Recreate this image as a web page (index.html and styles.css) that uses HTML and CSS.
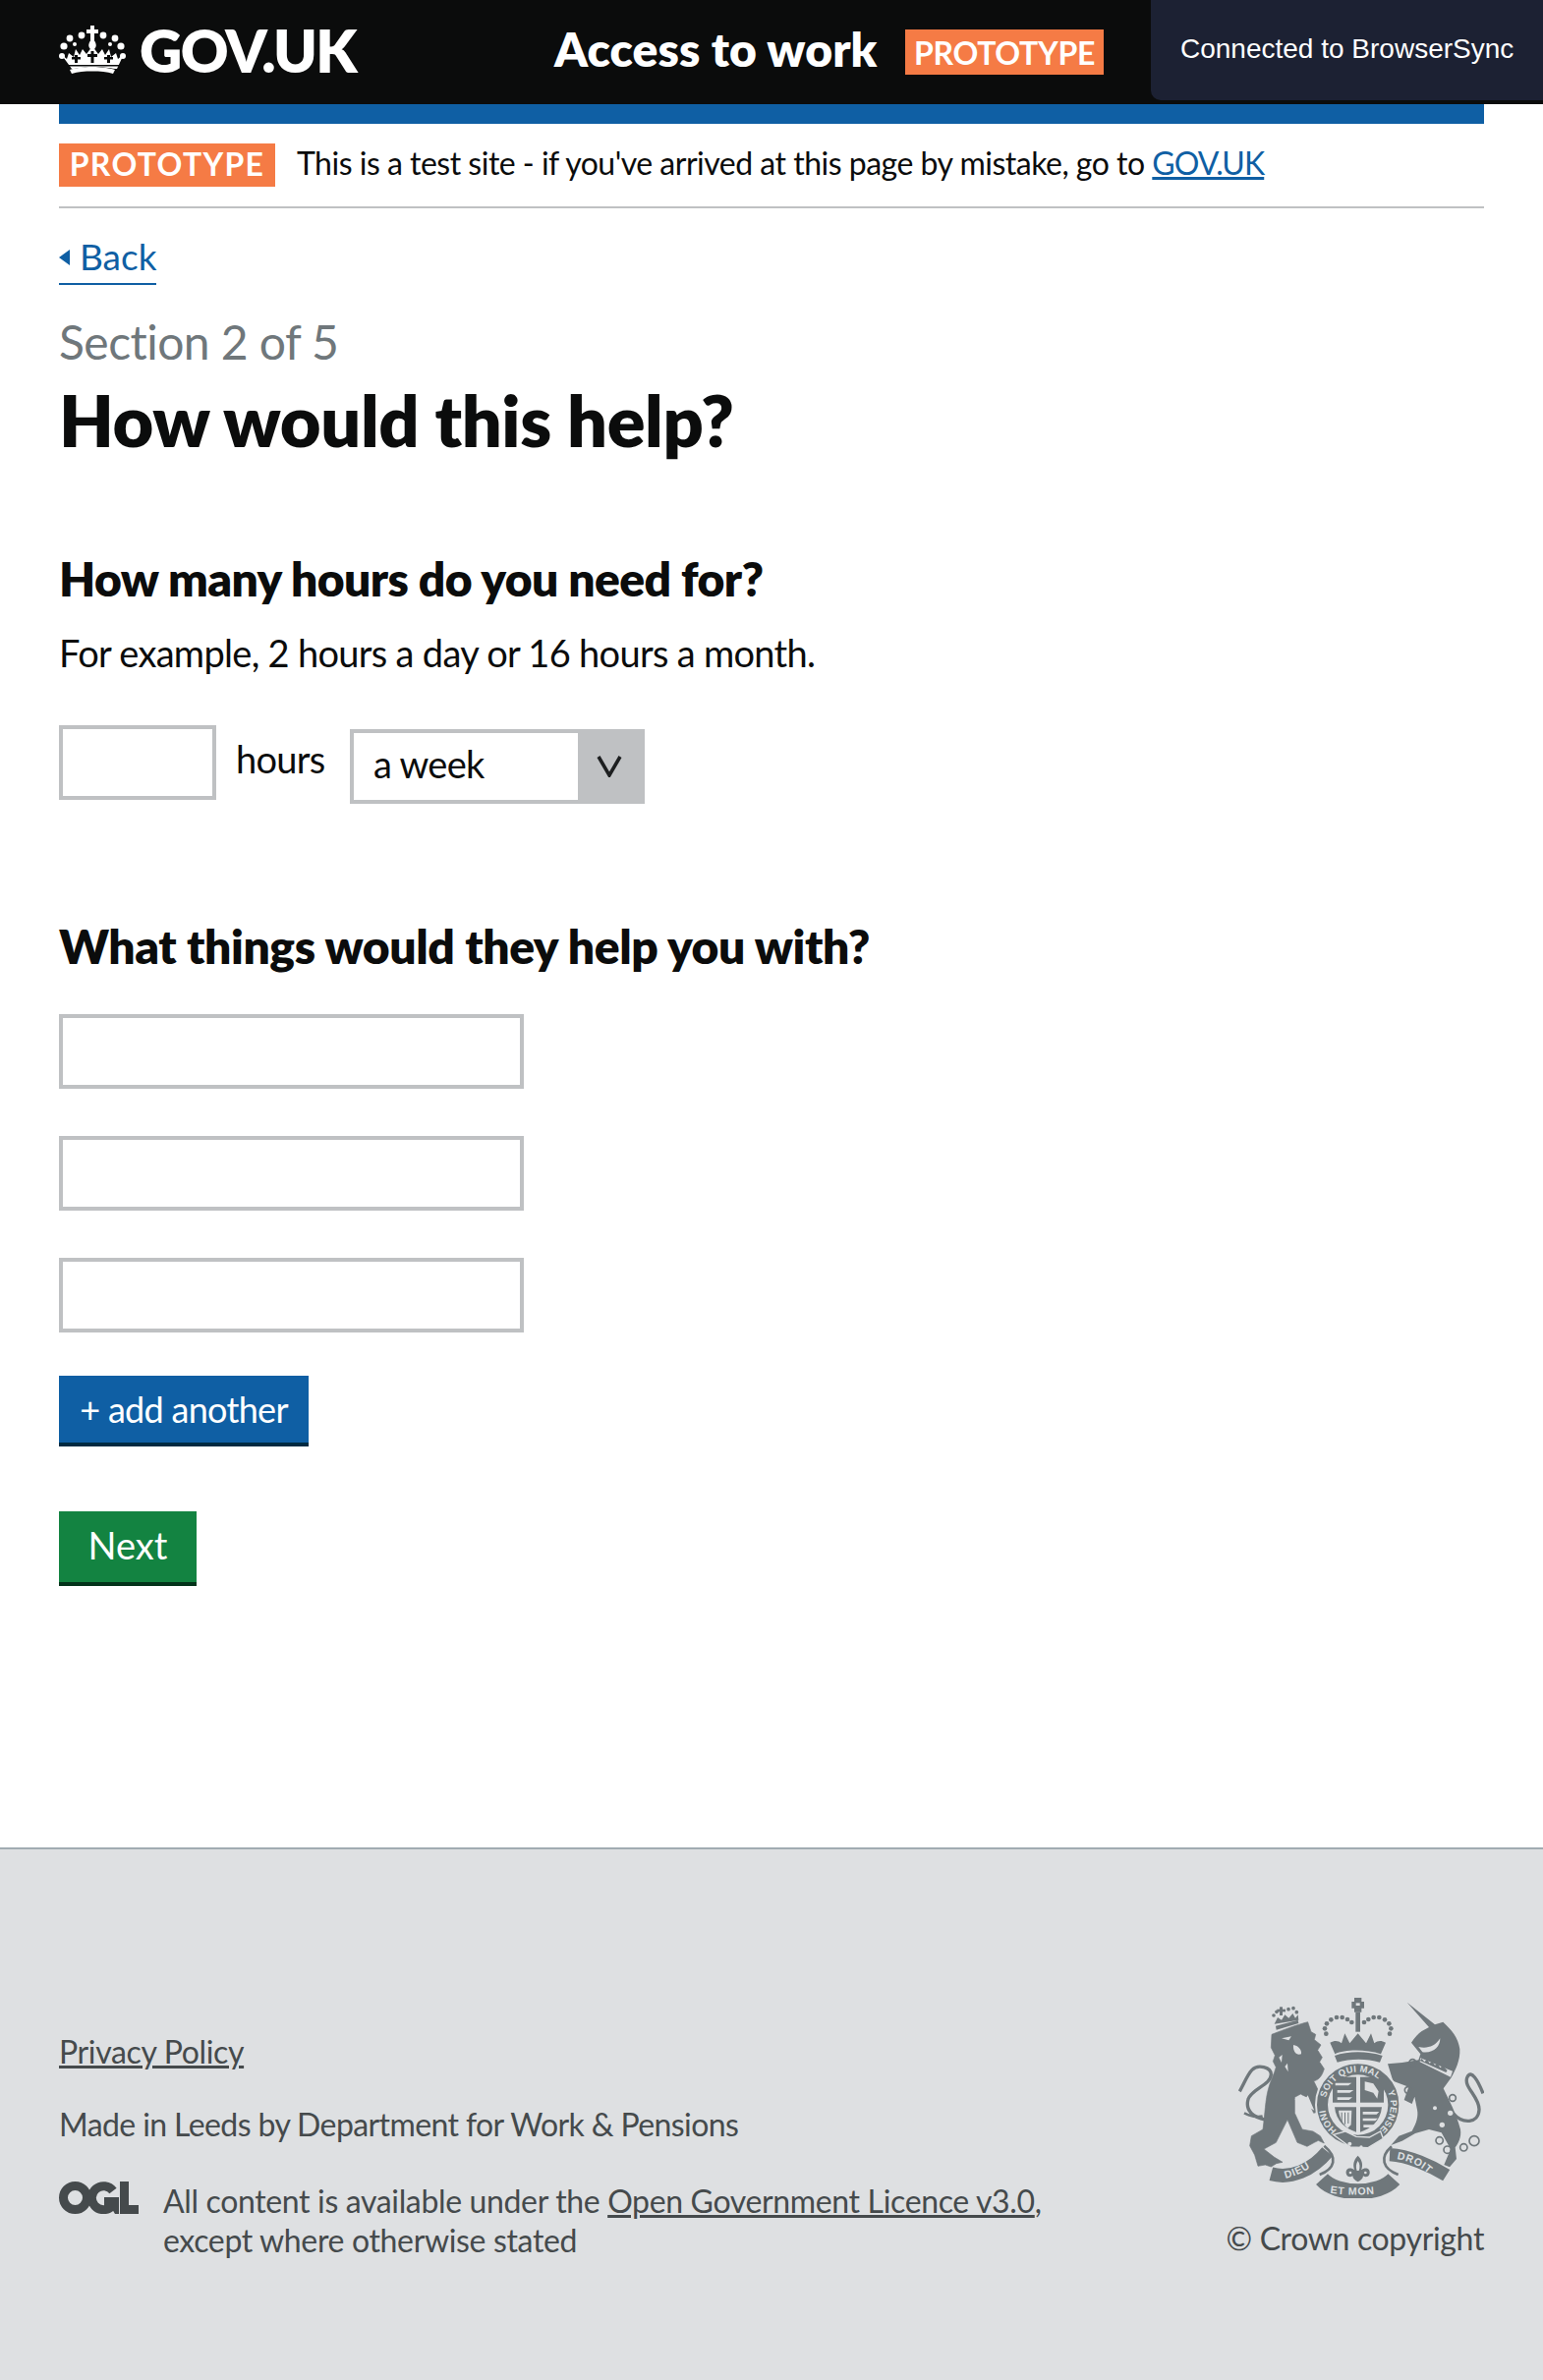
FILE: index.html
```html
<!DOCTYPE html>
<html lang="en">
<head>
<meta charset="utf-8">
<title>How would this help?</title>
<link rel="stylesheet" href="styles.css">
</head>
<body>
<header class="site-header">
  <a class="logo" href="#">
    <svg class="crown" viewBox="0 0 68 50" aria-hidden="true">
      <g fill="#fff">
        <rect x="32" y="0" width="4" height="15"/><rect x="28" y="4" width="12" height="4"/>
        <path d="M34 13c4 4 5 8 2 11h-4c-3-3-2-7 2-11z"/>
        <circle cx="23" cy="10" r="3.400"/><circle cx="45" cy="10" r="3.400"/>
        <circle cx="11" cy="13" r="3.400"/><circle cx="57" cy="13" r="3.400"/>
        <circle cx="5" cy="21" r="3.600"/><circle cx="63" cy="21" r="3.600"/>
        <circle cx="16" cy="19" r="2"/><circle cx="52" cy="19" r="2"/>
        <circle cx="3" cy="31" r="3"/><circle cx="65" cy="31" r="3"/>
        <path d="M2 29l6 5 2-6 5 4 2-8 4 6 3-6 4 5 6-8 6 8 4-5 3 6 4-6 2 8 5-4 2 6 6-5-7 15-2 0c-5-1-13-2-21-2s-16 1-21 2l-2 0z"/>
        <path d="M11 45c6-2 15-3 23-3s17 1 23 3l-2 4c-6-2-13-2.500-21-2.500s-15 .5-21 2.500z"/>
      </g>
      <g fill="#0b0c0c">
        <rect x="32.500" y="26" width="3" height="12"/><rect x="29" y="29" width="10" height="3"/>
        <rect x="16" y="30" width="3" height="8"/><rect x="49" y="30" width="3" height="8"/>
        <rect x="13" y="32" width="9" height="2.500"/><rect x="46" y="32" width="9" height="2.500"/>
        <rect x="7" y="40" width="54" height="1.500"/>
      </g>
    </svg>
    <span class="logo-text">GOV.UK</span>
  </a>
  <span class="service-name">Access to work</span>
  <span class="header-tag">PROTOTYPE</span>
</header>
<div class="notify">Connected to BrowserSync</div>

<div class="wrap">
  <div class="blue-bar"></div>
  <div class="phase">
    <span class="phase-tag">PROTOTYPE</span>
    <span class="phase-text">This is a test site - if you've arrived at this page by mistake, go to <a href="#">GOV.UK</a></span>
  </div>
  <a class="back" href="#">Back</a>

  <main>
    <p class="caption">Section 2 of 5</p>
    <h1>How would this help?</h1>

    <h2 class="q-one">How many hours do you need for?</h2>
    <p class="hint">For example, 2 hours a day or 16 hours a month.</p>
    <div class="hours-row">
      <div class="field field-short"></div>
      <span class="hours-label">hours</span>
      <div class="select">
        <span class="select-value">a week</span>
        <span class="select-arrow">
          <svg class="chevron" viewBox="0 0 26 22" aria-hidden="true"><path d="M2 1l11 19 11-19" fill="none" stroke="#1d1f20" stroke-width="3.500"/></svg>
        </span>
      </div>
    </div>

    <h2 class="q-two">What things would they help you with?</h2>
    <div class="fields">
      <div class="field field-long"></div>
      <div class="field field-long"></div>
      <div class="field field-long"></div>
    </div>
    <a class="btn btn-blue" href="#">+ add another</a>
    <a class="btn btn-green" href="#">Next</a>
  </main>
</div>

<footer class="site-footer">
  <div class="footer-left">
    <a class="footer-link" href="#">Privacy Policy</a>
    <p class="made">Made in Leeds by Department for Work &amp; Pensions</p>
    <div class="licence">
      <svg class="ogl" viewBox="0 0 81 33" aria-hidden="true">
        <circle cx="16.500" cy="16.500" r="12" fill="none" stroke="#454a4c" stroke-width="9"/>
        <path d="M55 9.500A12 12 0 1 0 54 25" fill="none" stroke="#454a4c" stroke-width="9"/>
        <path d="M46 16h15v17h-4l-3-5h-8z" fill="#454a4c"/>
        <path d="M62 0h9v24h10v9H62z" fill="#454a4c"/>
      </svg>
      <p class="licence-text">All content is available under the <a href="#">Open Government Licence v3.0</a>,<br>except where otherwise stated</p>
    </div>
  </div>
  <div class="footer-right">
    <svg class="crest" viewBox="90 65 750 615" aria-hidden="true">
      <defs>
        <path id="garter-top" d="M357 375A100 100 0 0 1 540 342"/>
        <path id="garter-right" d="M545 352A100 100 0 0 1 515 475"/>
        <path id="garter-left" d="M392 474A100 100 0 0 1 356 380"/>
        <path id="rib-left" d="M232 620C265 612 305 595 335 565"/>
        <path id="rib-mid" d="M368 664C420 672 490 672 545 660"/>
        <path id="rib-right" d="M572 560C620 566 660 590 688 622"/>
      </defs>
      <!-- tails -->
      <g fill="none" stroke="#6f777b">
        <path d="M172 440c-34-6-62-26-52-62 10-32 70-44 70-76 0-22-40-32-58-14-14 14-24 42-38 66" stroke-width="10"/>
        <path d="M108 420c20 10 38 14 56 10" stroke-width="8"/>
        <path d="M745 420c30 35 78 32 80-10 2-40-50-70-36-100 12-24 32 10 48 50" stroke-width="10"/>
      </g>
      <g fill="#6f777b" stroke="#6f777b" stroke-width="2" stroke-linejoin="round">
        <!-- lion -->
        <path d="M192 180C230 165 270 150 302 142L312 172 326 180 322 196 342 212 332 228 346 250 338 264 352 285C346 305 336 320 320 322L356 396 366 416 350 412 352 426 334 416 320 420 298 372 280 362 262 372 262 420 285 470 318 476 340 490 352 512 334 504 322 510 300 522 270 510 240 440 205 510 168 530 200 555 225 570 206 574 190 584 172 578 150 582 140 548 125 520 130 490 165 470C172 420 172 380 182 345 188 320 200 300 205 280L196 262 202 244 190 220Z"/>
      </g>
      <g fill="#dee0e2">
        <path d="M258 212c14 2 26 14 24 28-14 6-26-8-24-28z"/>
        <path d="M222 192l30-6-8 12z"/>
        <path d="M214 250l10-8-2 24zM232 278l8-10 2 26z"/>
        <path d="M262 378l18-12 18 6 4-6 20 46-14-8-10 0-14-14z"/>
      </g>
      <g fill="#6f777b">
        <!-- lion crown -->
        <path d="M200 148l10-20 12 8 10-16 12 10 12-14 8 14 8-10 2 16z"/>
        <path d="M206 166l68-20-2-10-68 18z"/>
        <rect x="216" y="96" width="9" height="26"/><rect x="208" y="103" width="26" height="8"/>
        <circle cx="198" cy="122" r="5.500"/><circle cx="207" cy="111" r="5.500"/><circle cx="243" cy="103" r="5.500"/><circle cx="258" cy="100" r="5.500"/><circle cx="268" cy="112" r="5.500"/>
        <!-- centre crown -->
        <path d="M444 68h22v12h8v20h-8v12h-22v-12h-8v-20h8z"/>
        <path d="M449 84h12v8h-12z" fill="#dee0e2"/>
        <rect x="448" y="112" width="14" height="60"/>
        <path d="M370 205c15-8 25-6 35 2l10-30 15 30 25-30 25 30 15-30 10 30c10-8 20-10 35-2l-15 35c-45-15-110-15-140 0z"/>
        <path d="M384 245c40-15 100-15 146 0l-8 20c-40-12-90-12-130 0z"/>
        <circle cx="358" cy="178" r="7"/><circle cx="354" cy="162" r="7"/><circle cx="360" cy="147" r="7"/><circle cx="373" cy="135" r="7"/><circle cx="390" cy="128" r="7"/><circle cx="407" cy="128" r="7"/><circle cx="423" cy="134" r="7"/><circle cx="436" cy="143" r="7"/>
        <circle cx="552" cy="178" r="7"/><circle cx="556" cy="162" r="7"/><circle cx="550" cy="147" r="7"/><circle cx="537" cy="135" r="7"/><circle cx="520" cy="128" r="7"/><circle cx="503" cy="128" r="7"/><circle cx="487" cy="134" r="7"/><circle cx="474" cy="143" r="7"/>
        <!-- unicorn -->
        <path d="M605 82L690 150 715 142C740 165 762 190 766 225 768 260 752 290 740 312L716 345C730 375 755 420 768 470 772 495 760 515 752 525L756 560 735 585 718 578 738 530 710 480 672 470 630 482 590 505 556 518 580 490 620 475C634 450 640 430 636 410L628 370 620 392 596 380 610 340 562 322 546 270 590 266 640 258 646 240 618 205C628 190 640 176 650 170L672 158Z"/>
        <path d="M640 218c24 6 50 0 66-26 0 26-20 46-54 42z" fill="#dee0e2"/>
        <circle cx="712" cy="456" r="8" fill="#dee0e2"/><circle cx="690" cy="405" r="6" fill="#dee0e2"/><circle cx="737" cy="420" r="8" fill="#dee0e2"/>
        <path d="M646 252l98 40-6 18-94-46z" fill="#dee0e2"/>
        <path d="M650 254l8 10 8-8 8 12 8-6 8 12 8-6 8 14 8-6 14 14-4 6-80-36z"/>
        <!-- garter -->
        <circle cx="455" cy="395" r="128" stroke="#dee0e2" stroke-width="6"/>
        <circle cx="455" cy="395" r="92" fill="#dee0e2"/>
        <!-- shield quarters -->
        <path d="M378 310h72v78h-72z"/><path d="M462 310h72v78h-72z"/>
        <path d="M384 402h66v76c-30-8-62-32-66-76z"/><path d="M462 402h66c-4 44-36 68-66 76z"/>
        <g fill="#dee0e2">
          <path d="M386 328h50l-10 8h-40zM392 350h50l-12 8h-38zM392 372h46l-10 8h-36z"/>
          <path d="M476 324l26 6 16 24-4 22-12-18-26-8z"/>
          <path d="M470 416h50l-8 8h-42zM470 436h46l-8 8h-38zM472 456h34l-8 8h-26z"/>
          <path d="M396 412l40 0-2 44-10 10c-14-12-26-32-28-54z"/>
        </g>
        <path d="M404 418h3v30h-3zM414 418h3v36h-3zM424 418h3v34h-3z"/>
        <!-- garter buckle -->
        <path d="M380 486l36-10 34 16 40 2 34-18 8 22-46 28-54-2z" stroke="#dee0e2" stroke-width="4"/>
        <circle cx="430" cy="514" r="6" fill="#dee0e2"/><circle cx="465" cy="524" r="5" fill="#dee0e2"/>
        <!-- fleur -->
        <path d="M455 550c14 14 16 30 10 44 12-10 28-6 26 10-2 10-12 14-20 8 0 8-8 14-16 18-8-4-16-10-16-18-8 6-18 2-20-8-2-16 14-20 26-10-6-14-4-30 10-44z"/>
        <path d="M455 566c6 8 7 20 3 30h-6c-4-10-3-22 3-30z" fill="#dee0e2"/>
        <circle cx="432" cy="602" r="4" fill="#dee0e2"/><circle cx="478" cy="602" r="4" fill="#dee0e2"/>
      </g>
      <!-- scroll -->
      <g fill="none" stroke="#6f777b">
        <path d="M190 606C250 622 315 595 362 538" stroke-width="42"/>
        <path d="M345 622C390 672 520 672 565 622" stroke-width="48"/>
        <path d="M552 547C610 550 680 582 725 610" stroke-width="40"/>
        <path d="M352 520C395 555 385 590 338 608" stroke-width="8"/>
        <path d="M558 522C520 555 530 590 578 608" stroke-width="8"/>
      </g>
      <g fill="none" stroke="#6f777b" stroke-width="5">
        <circle cx="622" cy="266" r="10"/>
        <circle cx="608" cy="350" r="10"/>
        <circle cx="744" cy="374" r="10"/>
        <circle cx="704" cy="504" r="11"/>
        <circle cx="728" cy="532" r="11"/>
        <circle cx="778" cy="525" r="11"/>
        <circle cx="810" cy="505" r="15"/>
      </g>
      <g class="crest-text">
        <text><textPath href="#garter-top" startOffset="2">SOIT QUI MAL</textPath></text>
        <text><textPath href="#garter-right" startOffset="2">Y PENSE</textPath></text>
        <text><textPath href="#garter-left" startOffset="2">HONI</textPath></text>
        <text class="rib"><textPath href="#rib-left" startOffset="2">DIEU</textPath></text>
        <text class="rib"><textPath href="#rib-mid" startOffset="2">ET MON</textPath></text>
        <text class="rib"><textPath href="#rib-right" startOffset="2">DROIT</textPath></text>
      </g>
    </svg>
    <span class="copyright">© Crown copyright</span>
  </div>
</footer>
</body>
</html>
```

FILE: styles.css
```css
* { box-sizing: border-box; }
html, body { margin: 0; padding: 0; }
body {
  position: relative;
  font-family: "Lato", "Noto Sans", sans-serif;
  color: #0b0c0c;
  background: #fff;
  min-height: 2422px;
  display: flex;
  flex-direction: column;
}
a { color: #0f5fa4; }

.site-header {
  background: #0b0c0c;
  height: 106px;
  display: flex;
  align-items: center;
  padding: 0 0 4px 60px;
}
.logo { display: flex; align-items: center; color: #fff; text-decoration: none; width: 504px; }
.crown { width: 68px; height: 50px; margin-right: 14px; }
.logo-text { font-size: 60px; font-weight: 800; line-height: 1; letter-spacing: -1.7px; }
.service-name { color: #fff; font-size: 48px; font-weight: 800; width: 357px; letter-spacing: 0.1px; padding-bottom: 3px; }
.header-tag {
  background: #f57b45;
  color: #fff;
  font-size: 32px;
  font-weight: 700;
  letter-spacing: -0.3px;
  height: 46px;
  width: 202px;
  margin-top: 4px;
  display: flex;
  align-items: center;
  justify-content: center;
}
.notify {
  position: absolute;
  top: 0;
  right: 0;
  width: 399px;
  height: 102px;
  background: #1c2133;
  color: #fff;
  font-family: "Liberation Sans", sans-serif;
  font-size: 28px;
  line-height: 100px;
  padding-left: 30px;
  border-bottom-left-radius: 10px;
}

.wrap { padding: 0 60px; flex: 1; }
.blue-bar { height: 20px; background: #0f5fa4; }
.phase {
  display: flex;
  align-items: center;
  height: 86px;
  border-bottom: 2px solid #bfc1c3;
}
.phase-tag {
  background: #f57b45;
  color: #fff;
  font-size: 32px;
  font-weight: 700;
  letter-spacing: 1.3px;
  height: 44px;
  width: 220px;
  padding-bottom: 3px;
  display: flex;
  align-items: center;
  justify-content: center;
  margin-right: 22px;
}
.phase-text { font-size: 32px; letter-spacing: -0.5px; padding-bottom: 6px; }
.phase-text a { letter-spacing: -0.9px; }

.back {
  display: inline-block;
  margin-top: 30px;
  font-size: 37px;
  line-height: 38px;
  height: 48px;
  padding-left: 21px;
  color: #0f5fa4;
  text-decoration: none;
  border-bottom: 2px solid #0f5fa4;
  position: relative;
}
.back::before {
  content: "";
  position: absolute;
  left: 0;
  top: 12px;
  border-style: solid;
  border-width: 8px 11px 8px 0;
  border-color: transparent #0f5fa4 transparent transparent;
}

main { display: flex; flex-direction: column; align-items: flex-start; }
p, h1, h2 { margin: 0; }
.caption { color: #6f777b; font-size: 48px; line-height: 60px; margin-top: 28px; letter-spacing: -0.55px; }
h1 { font-size: 72px; line-height: 80px; margin-top: 9px; font-weight: 800; letter-spacing: -0.4px; }
h2 { font-size: 48px; line-height: 60px; font-weight: 800; }
.q-one { margin-top: 92px; letter-spacing: -0.6px; }
.hint { font-size: 38px; line-height: 50px; margin-top: 20px; letter-spacing: -0.7px; }
.hours-row { display: flex; align-items: flex-start; margin-top: 49px; }
.field { border: 4px solid #bfc1c3; height: 76px; background: #fff; }
.field-short { width: 160px; }
.hours-label { font-size: 38px; line-height: 68px; margin-left: 20px; width: 116px; letter-spacing: -0.7px; }
.select {
  display: flex;
  margin-top: 4px;
  width: 300px;
  height: 76px;
  border: 4px solid #bfc1c3;
}
.select-value { flex: 1; font-size: 38px; line-height: 63px; padding-left: 20px; letter-spacing: -0.7px; }
.select-arrow {
  width: 64px;
  background: #bfc1c3;
  display: flex;
  align-items: center;
  justify-content: center;
}
.chevron { width: 26px; height: 22px; }
.q-two { margin-top: 115px; letter-spacing: -0.4px; }
.fields { display: flex; flex-direction: column; gap: 48px; margin-top: 39px; }
.field-long { width: 473px; }
.btn { color: #fff; text-decoration: none; display: flex; align-items: center; justify-content: center; }
.btn-blue {
  background: #0f5fa4;
  box-shadow: 0 4px 0 #002a42;
  width: 254px;
  height: 68px;
  font-size: 36px;
  letter-spacing: -0.7px;
  margin-top: 44px;
}
.btn-green {
  background: #138341;
  box-shadow: 0 4px 0 #03331a;
  width: 140px;
  height: 72px;
  font-size: 38px;
  padding-bottom: 4px;
  margin-top: 70px;
}

.site-footer {
  height: 542px;
  background: #dee0e2;
  border-top: 2px solid #a1acb2;
  color: #454a4c;
  padding: 0 60px 0 60px;
  display: flex;
  justify-content: space-between;
  font-size: 32px;
  letter-spacing: -0.35px;
}
.footer-left { padding-top: 186px; }
.footer-link { color: #454a4c; line-height: 40px; display: block; }
.made { line-height: 40px; margin-top: 34px; letter-spacing: -0.6px; }
.licence { display: flex; margin-top: 38px; }
.ogl { width: 81px; height: 33px; margin-right: 25px; flex: none; }
.licence-text { line-height: 40px; }
.licence-text a { color: #454a4c; }
.footer-right { display: flex; flex-direction: column; align-items: center; padding-top: 150px; width: 250px; }
.crest { width: 250px; height: 205px; flex: none; }
.crest-text text { font-family: "Liberation Sans", sans-serif; font-size: 28px; font-weight: 700; letter-spacing: 1px; fill: #dee0e2; }
.crest-text .rib { font-size: 32px; letter-spacing: 2px; }
.copyright { white-space: nowrap; color: #454a4c; margin-top: 21px; align-self: flex-end; line-height: 40px; }
```
